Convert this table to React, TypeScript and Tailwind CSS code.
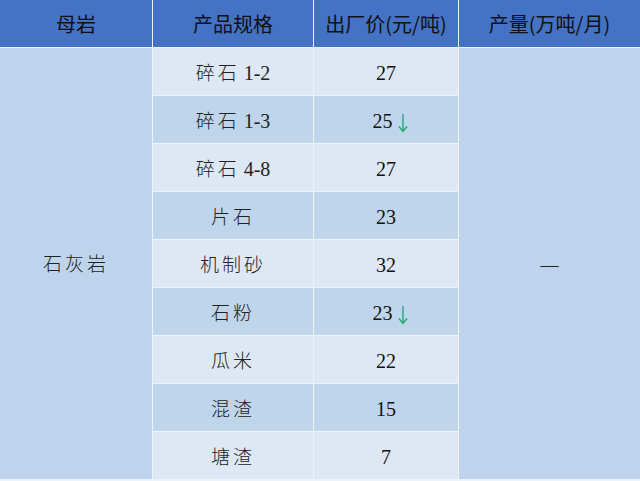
import React from "react";

const rows: { cn: string; num?: string; price: string; down?: boolean }[] = [
  { cn: "碎石", num: "1-2", price: "27" },
  { cn: "碎石", num: "1-3", price: "25", down: true },
  { cn: "碎石", num: "4-8", price: "27" },
  { cn: "片石", price: "23" },
  { cn: "机制砂", price: "32" },
  { cn: "石粉", price: "23", down: true },
  { cn: "瓜米", price: "22" },
  { cn: "混渣", price: "15" },
  { cn: "塘渣", price: "7" },
];

const serif = { fontFamily: '"Liberation Serif", "Noto Sans CJK SC", serif' };
const sans = { fontFamily: '"Noto Sans CJK SC", "Liberation Sans", sans-serif' };

function DownArrow() {
  return (
    <svg width="10" height="20" viewBox="0 0 10 20" className="ml-[5px] mt-[5px]">
      <line x1="5" y1="1" x2="5" y2="18" stroke="#19a86a" strokeWidth="1.3" />
      <polyline points="1,13.5 5,18.5 9,13.5" fill="none" stroke="#19a86a" strokeWidth="1.3" />
    </svg>
  );
}

export default function App() {
  return (
    <div className="w-[640px] h-[481px] bg-[#eef3fa] overflow-hidden">
      <div className="grid grid-cols-[152px_160px_144px_181px] grid-rows-[47px_repeat(9,47px)] gap-px bg-[#eef3fa]">
        {["母岩", "产品规格", "出厂价(元/吨)", "产量(万吨/月)"].map((h) => (
          <div
            key={h}
            className="bg-[#4472c4] flex items-center justify-center text-[20px] text-[#111]"
            style={sans}
          >
            {h}
          </div>
        ))}
        <div
          className="row-start-2 row-span-9 col-start-1 bg-[#bdd4ec] flex items-center justify-center text-[19px] text-[#222] tracking-[3px] font-light"
          style={sans}
        >
          石灰岩
        </div>
        {rows.map((r, i) => {
          const bg = i % 2 === 0 ? "bg-[#dde8f4]" : "bg-[#bed5ec]";
          return (
            <React.Fragment key={i}>
              <div
                className={`${bg} col-start-2 flex items-center justify-center text-[19px] text-[#222] font-light pt-[2px]`}
                style={{ ...serif, gridRowStart: i + 2 }}
              >
                <span className="tracking-[3px]" style={sans}>{r.cn}</span>
                {r.num && <span className="ml-[4px] text-[20px] font-normal">{r.num}</span>}
              </div>
              <div
                className={`${bg} col-start-3 flex items-center justify-center text-[20px] text-[#111] pt-[2px]`}
                style={{ ...serif, gridRowStart: i + 2 }}
              >
                <span className={r.down ? "pl-[8px]" : ""}>{r.price}</span>
                {r.down && <DownArrow />}
              </div>
            </React.Fragment>
          );
        })}
        <div className="row-start-2 row-span-9 col-start-4 bg-[#bdd4ec] flex items-center justify-center text-[18px] text-[#222]" style={serif}>
          <span className="pt-[4px]">—</span>
        </div>
      </div>
    </div>
  );
}
